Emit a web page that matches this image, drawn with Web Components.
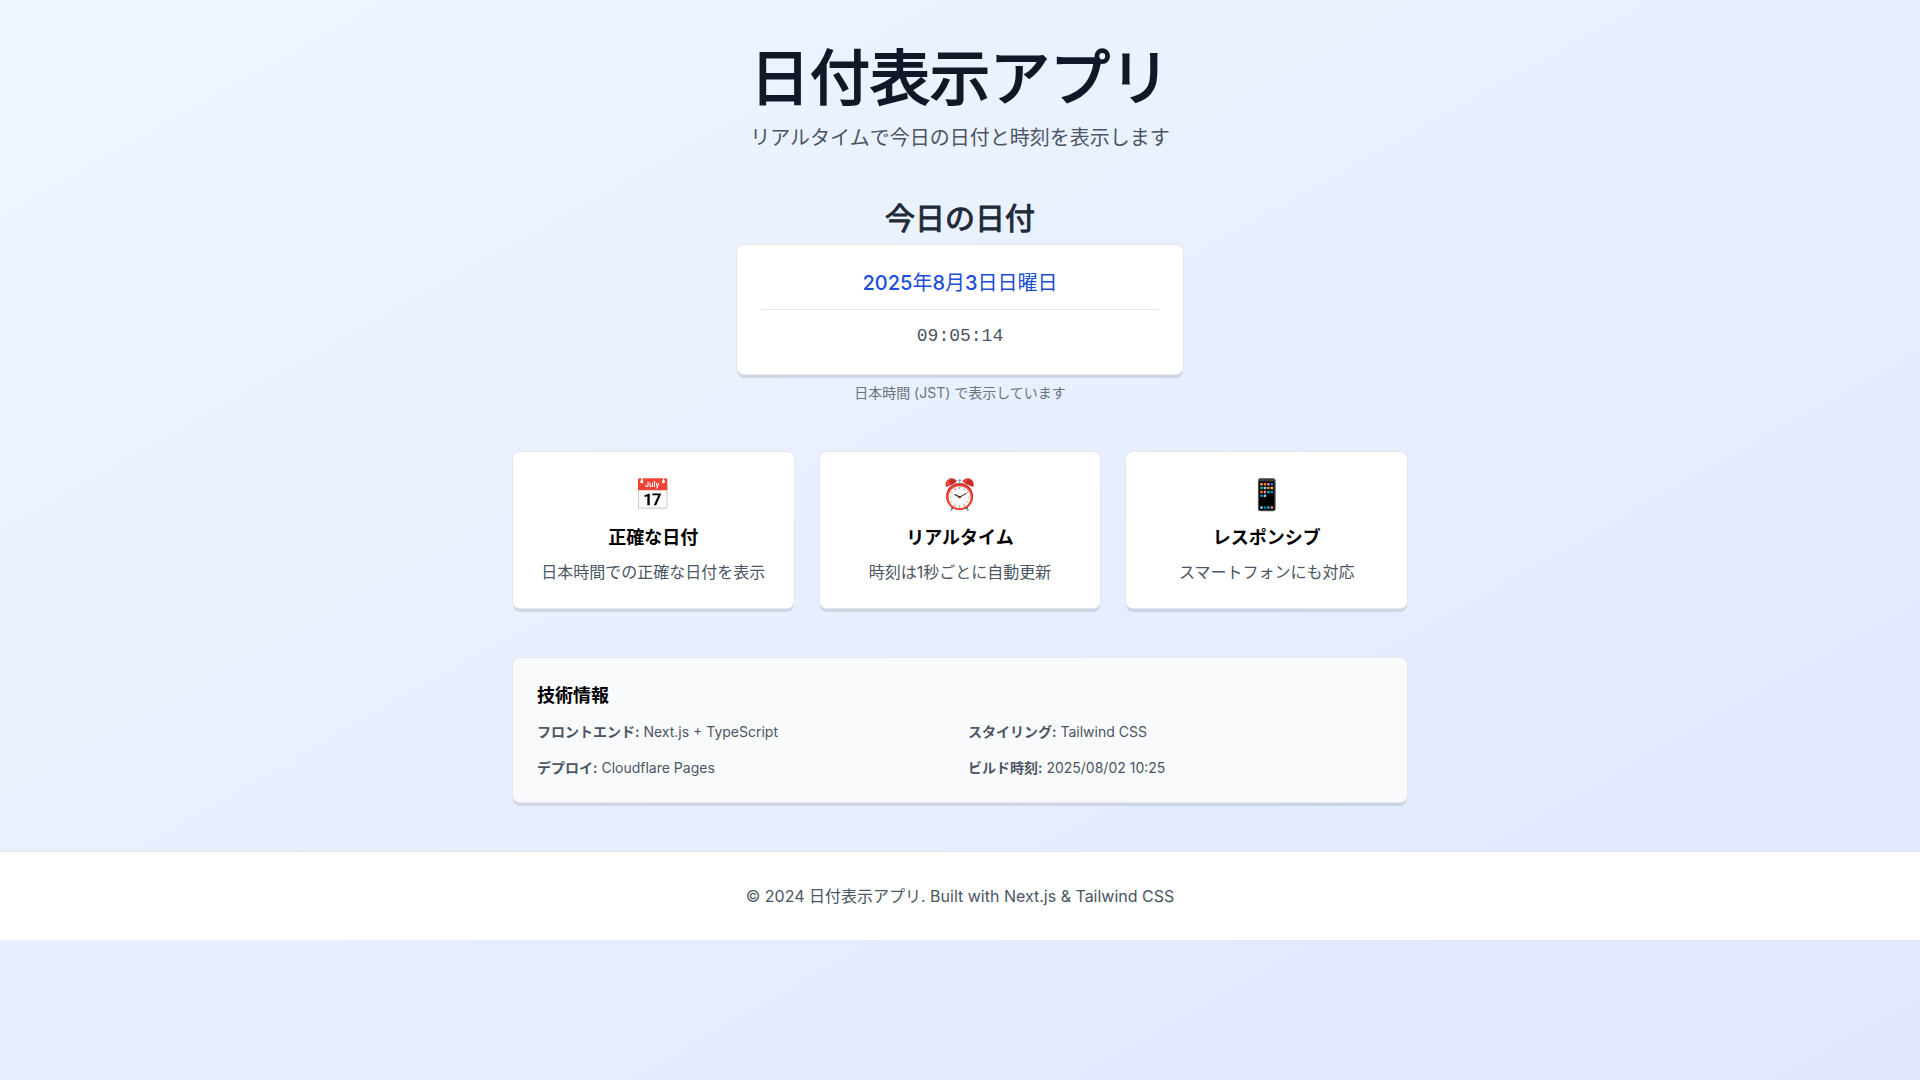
<!DOCTYPE html>
<html lang="ja">
<head>
<meta charset="utf-8">
<meta name="viewport" content="width=device-width, initial-scale=1">
<title>日付表示アプリ</title>
<style>
  body {
    margin: 0;
    font-family: Inter, "Noto Sans CJK JP", "Noto Color Emoji", sans-serif;
    font-size: 16px;
    line-height: 24px;
    color: #000;
    --border: #e5e7eb;
    --muted: #4b5563;
  }
</style>
</head>
<body>
<date-app></date-app>

<template id="date-app">
  <style>
    :host { display: block; min-height: 100vh; background: linear-gradient(to bottom right, #eff6ff, #e0e7ff); }
    main { max-width: 896px; margin: 0 auto; padding: 42px 16px 48px; display: flex; flex-direction: column; gap: 48px; }
    header { text-align: center; }
    h1 { margin: 0 0 10px; font-size: 60px; line-height: 72px; font-weight: 400; -webkit-text-stroke: 2px; color: #111827; }
    header p { margin: 0; font-size: 20px; line-height: 28px; color: var(--muted); }
    .features { display: grid; grid-template-columns: repeat(auto-fit, minmax(240px, 1fr)); gap: 24px; }
  </style>
  <main>
    <header>
      <h1>日付表示アプリ</h1>
      <p>リアルタイムで今日の日付と時刻を表示します</p>
    </header>
    <date-panel date="2025年8月3日日曜日" time="09:05:14"></date-panel>
    <div class="features">
      <feature-card><span slot="icon">📅</span><span slot="title">正確な日付</span>日本時間での正確な日付を表示</feature-card>
      <feature-card><span slot="icon">⏰</span><span slot="title">リアルタイム</span>時刻は1秒ごとに自動更新</feature-card>
      <feature-card><span slot="icon">📱</span><span slot="title">レスポンシブ</span>スマートフォンにも対応</feature-card>
    </div>
    <tech-info></tech-info>
  </main>
  <page-footer>© 2024 日付表示アプリ. Built with Next.js &amp; Tailwind CSS</page-footer>
</template>

<template id="surface-card">
  <style>
    :host { display: block; box-sizing: border-box; padding: 24px; background: var(--surface, #fff); border: 1px solid var(--border); border-radius: 8px; box-shadow: 0 4px 0 -1px rgba(0, 0, 0, 0.1); }
  </style>
  <slot></slot>
</template>

<template id="date-panel">
  <style>
    :host { display: flex; flex-direction: column; align-items: center; gap: 8px; text-align: center; }
    h2 { margin: 0; font-size: 30px; line-height: 36px; font-weight: 400; -webkit-text-stroke: 1px; color: #1f2937; }
    surface-card { width: 100%; max-width: 448px; }
    .date { padding-bottom: 12px; border-bottom: 1px solid var(--border); font-size: 20px; line-height: 28px; font-weight: 400; color: #1d4ed8; }
    .date b { font-weight: 500; }
    .time { padding-top: 12px; font-family: "Liberation Mono", monospace; font-size: 18px; line-height: 28px; color: var(--muted); }
    p { margin: 0; font-size: 14px; line-height: 20px; color: #6b7280; }
  </style>
  <h2>今日の日付</h2>
  <surface-card>
    <div class="date"></div>
    <div class="time"></div>
  </surface-card>
  <p>日本時間 (JST) で表示しています</p>
</template>

<template id="feature-card">
  <style>
    :host { display: block; text-align: center; }
    .icon { font-size: 30px; line-height: 36px; margin-bottom: 12px; }
    h3 { margin: 0 0 8px; font-size: 18px; line-height: 28px; font-weight: 600; }
    p { margin: 0; color: var(--muted); }
  </style>
  <surface-card>
    <div class="icon"><slot name="icon"></slot></div>
    <h3><slot name="title"></slot></h3>
    <p><slot></slot></p>
  </surface-card>
</template>

<template id="tech-info">
  <style>
    :host { display: block; }
    surface-card { --surface: #f9fafb; }
    h3 { margin: 0 0 12px; font-size: 18px; line-height: 28px; font-weight: 600; }
    dl { margin: 0; display: grid; grid-template-columns: repeat(2, 1fr); gap: 16px; font-size: 14px; line-height: 20px; color: var(--muted); }
    dt, dd { display: inline; margin: 0; }
    dt { font-weight: 600; }
  </style>
  <surface-card>
    <h3>技術情報</h3>
    <dl>
      <div><dt>フロントエンド:</dt> <dd>Next.js + TypeScript</dd></div>
      <div><dt>スタイリング:</dt> <dd>Tailwind CSS</dd></div>
      <div><dt>デプロイ:</dt> <dd>Cloudflare Pages</dd></div>
      <div><dt>ビルド時刻:</dt> <dd>2025/08/02 10:25</dd></div>
    </dl>
  </surface-card>
</template>

<template id="page-footer">
  <style>
    :host { display: block; }
    footer { padding: 32px 16px; background: #fff; border-top: 1px solid var(--border); text-align: center; color: var(--muted); }
  </style>
  <footer><slot></slot></footer>
</template>

<script>
  class TemplateElement extends HTMLElement {
    constructor() {
      super();
      const template = document.getElementById(this.localName);
      this.attachShadow({ mode: "open" }).append(template.content.cloneNode(true));
    }
  }
  class SurfaceCard extends TemplateElement {}
  class DatePanel extends TemplateElement {
    connectedCallback() {
      // Digits carry more weight than the kanji between them.
      this.shadowRoot.querySelector(".date").innerHTML =
        this.getAttribute("date").replace(/\d+/g, "<b>$&</b>");
      this.shadowRoot.querySelector(".time").textContent = this.getAttribute("time");
    }
  }
  class FeatureCard extends TemplateElement {}
  class TechInfo extends TemplateElement {}
  class PageFooter extends TemplateElement {}
  class DateApp extends TemplateElement {}
  customElements.define("surface-card", SurfaceCard);
  customElements.define("date-panel", DatePanel);
  customElements.define("feature-card", FeatureCard);
  customElements.define("tech-info", TechInfo);
  customElements.define("page-footer", PageFooter);
  customElements.define("date-app", DateApp);
</script>
</body>
</html>
